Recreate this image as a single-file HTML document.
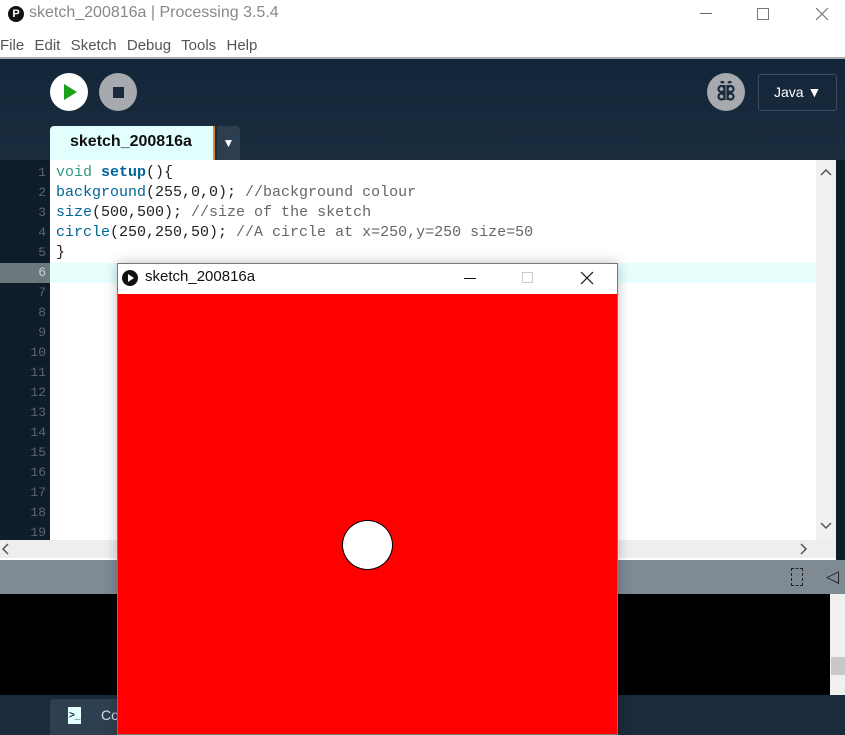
<!DOCTYPE html>
<html><head><style>
*{margin:0;padding:0;box-sizing:border-box}
body{width:845px;height:735px;overflow:hidden;background:#fff;font-family:"Liberation Sans",sans-serif;position:relative}
.a{position:absolute}
.code{font-family:"Liberation Mono",monospace;font-size:15px;line-height:20px;white-space:pre}
.ln{font-family:"Liberation Mono",monospace;font-size:13px;line-height:20px;color:#5a6770;text-align:right;width:46px;white-space:pre}
</style></head><body>
<div class="a" style="left:8px;top:6px;width:16px;height:16px;border-radius:50%;background:#111;color:#fff;font-size:11px;font-weight:bold;text-align:center;line-height:16px">P</div>
<div class="a" style="left:29px;top:4px;font-size:16px;color:#888">sketch_200816a | Processing 3.5.4</div>
<div class="a" style="left:700px;top:13px;width:12px;height:1px;background:#666"></div>
<div class="a" style="left:757px;top:8px;width:12px;height:12px;border:1px solid #777"></div>
<svg class="a" style="left:815px;top:7px" width="14" height="14"><path d="M1 1L13 13M13 1L1 13" stroke="#777" stroke-width="1.2"/></svg>
<div class="a" style="left:0;top:37px;font-size:15px;color:#555;word-spacing:1px">File&nbsp; Edit&nbsp; Sketch&nbsp; Debug&nbsp; Tools&nbsp; Help</div>
<div class="a" style="left:0;top:57px;width:845px;height:2px;background:#aaa"></div>
<div class="a" style="left:0;top:59px;width:845px;height:101px;background:linear-gradient(#132538,#1a2c3e)"></div>
<div class="a" style="left:50px;top:73px;width:38px;height:38px;border-radius:50%;background:#fff"></div>
<svg class="a" style="left:63px;top:83px" width="16" height="18"><path d="M1 1L14 9L1 17Z" fill="#1aa01a"/></svg>
<div class="a" style="left:99px;top:73px;width:38px;height:38px;border-radius:50%;background:#a6aaae"></div>
<div class="a" style="left:113px;top:87px;width:11px;height:11px;background:#1a2a3a"></div>
<div class="a" style="left:707px;top:73px;width:38px;height:38px;border-radius:50%;background:#a6aaae"></div>
<svg class="a" style="left:715px;top:80px" width="22" height="24"><g fill="none" stroke="#1a2a3a" stroke-width="2.2"><path d="M9 3Q7 1 6 3M13 3Q15 1 16 3"/><circle cx="6.5" cy="9" r="3"/><circle cx="6.5" cy="16.5" r="3"/><circle cx="15.5" cy="9" r="3"/><circle cx="15.5" cy="16.5" r="3"/><path d="M9.5 5V20M12.5 5V20"/></g></svg>
<div class="a" style="left:758px;top:74px;width:79px;height:37px;border:1px solid #3d4d5d;border-radius:3px;color:#fff;font-size:14px;line-height:35px;padding-left:15px">Java ▼</div>
<div class="a" style="left:50px;top:126px;width:163px;height:34px;background:#e0fffd;border-radius:4px 0 0 0"></div>
<div class="a" style="left:70px;top:133px;font-size:16px;font-weight:bold;color:#111">sketch_200816a</div>
<div class="a" style="left:213px;top:126px;width:2px;height:34px;background:#e08a30"></div>
<div class="a" style="left:217px;top:126px;width:23px;height:34px;background:#2c3e50;border-radius:0 4px 0 0;color:#fff;font-size:12px;text-align:center;line-height:34px">▼</div>
<div class="a" style="left:0;top:160px;width:50px;height:380px;background:#0f1c29"></div>
<div class="a" style="left:50px;top:160px;width:766px;height:380px;background:#fff"></div>
<div class="a" style="left:816px;top:160px;width:20px;height:380px;background:#f0f0f0"></div>
<div class="a" style="left:836px;top:160px;width:9px;height:400px;background:#0f1c29"></div>
<div class="a" style="left:0;top:263px;width:50px;height:20px;background:#6b797d"></div>
<div class="a" style="left:50px;top:263px;width:766px;height:20px;background:#e6fffd"></div>
<div class="a ln" style="left:0;top:163px">1
2
3
4
5
<span style="color:#c5d0d3">6</span>
7
8
9
10
11
12
13
14
15
16
17
18
19</div>
<div class="a code" style="left:56px;top:163px;color:#222"><span style="color:#33997e">void</span> <b style="color:#006699">setup</b>(){
<span style="color:#006699">background</span>(255,0,0); <span style="color:#666">//background colour</span>
<span style="color:#006699">size</span>(500,500); <span style="color:#666">//size of the sketch</span>
<span style="color:#006699">circle</span>(250,250,50); <span style="color:#666">//A circle at x=250,y=250 size=50</span>
}</div>
<svg class="a" style="left:820px;top:168px" width="12" height="8"><path d="M1 7L6 2L11 7" stroke="#555" stroke-width="1.5" fill="none"/></svg>
<svg class="a" style="left:820px;top:522px" width="12" height="8"><path d="M1 1L6 6L11 1" stroke="#555" stroke-width="1.5" fill="none"/></svg>
<div class="a" style="left:0;top:540px;width:836px;height:18px;background:#eee"></div>
<svg class="a" style="left:1px;top:543px" width="8" height="12"><path d="M7 1L2 6L7 11" stroke="#555" stroke-width="1.5" fill="none"/></svg>
<svg class="a" style="left:800px;top:543px" width="8" height="12"><path d="M1 1L6 6L1 11" stroke="#555" stroke-width="1.5" fill="none"/></svg>
<div class="a" style="left:0;top:560px;width:845px;height:34px;background:#7f8a93"></div>
<div class="a" style="left:791px;top:568px;width:12px;height:18px;border:1px dashed #222"></div>
<div class="a" style="left:826px;top:567px;font-size:17px;color:#222">◁</div>
<div class="a" style="left:0;top:594px;width:845px;height:101px;background:#000"></div>
<div class="a" style="left:830px;top:594px;width:15px;height:101px;background:#f0f0f0"></div>
<div class="a" style="left:831px;top:657px;width:14px;height:18px;background:#c8c8c8"></div>
<div class="a" style="left:0;top:695px;width:845px;height:40px;background:#1a2b3b"></div>
<div class="a" style="left:50px;top:699px;width:100px;height:36px;background:#2e4050;border-radius:4px 4px 0 0"></div>
<div class="a" style="left:68px;top:707px;width:13px;height:17px;background:#e0fffd;color:#1a2b3b;font-size:10px;font-weight:bold;line-height:17px;padding-left:1px">&gt;_</div>
<div class="a" style="left:101px;top:707px;color:#dde;font-size:14px">Co</div>
<div class="a" style="left:117px;top:263px;width:501px;height:472px;background:#f00;border:1px solid #777;box-shadow:0 0 12px rgba(0,0,0,.25)"></div>
<div class="a" style="left:118px;top:264px;width:499px;height:30px;background:#fff"></div>
<div class="a" style="left:122px;top:270px;width:16px;height:16px;border-radius:50%;background:#111"></div>
<svg class="a" style="left:127px;top:274px" width="8" height="8"><path d="M1 0L7 4L1 8Z" fill="#fff"/></svg>
<div class="a" style="left:145px;top:268px;font-size:15px;color:#111">sketch_200816a</div>
<div class="a" style="left:464px;top:278px;width:12px;height:1px;background:#111"></div>
<div class="a" style="left:522px;top:272px;width:11px;height:11px;border:1px solid #ccc"></div>
<svg class="a" style="left:580px;top:271px" width="14" height="14"><path d="M1 1L13 13M13 1L1 13" stroke="#111" stroke-width="1.2"/></svg>
<div class="a" style="left:342px;top:520px;width:51px;height:50px;border-radius:50%;background:#fff;border:1px solid #000"></div>
</body></html>
